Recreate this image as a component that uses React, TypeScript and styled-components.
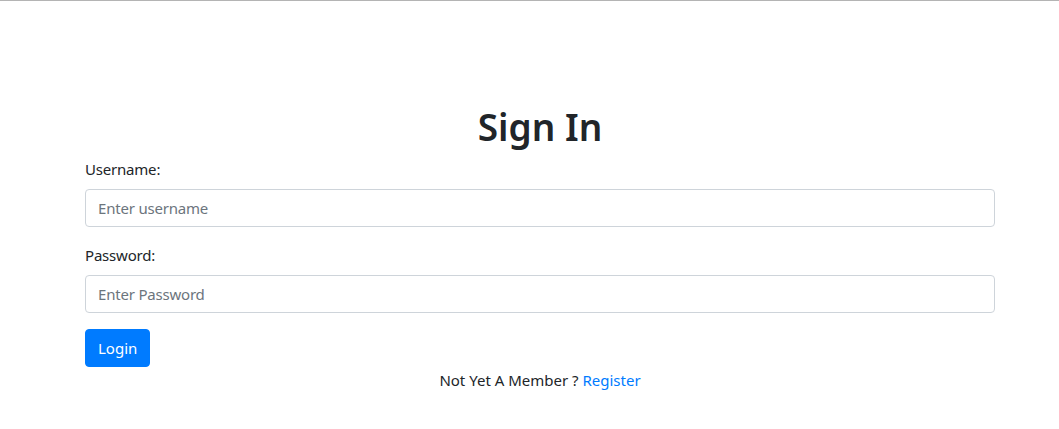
import React from "react";
import styled, { createGlobalStyle } from "styled-components";

const GlobalStyle = createGlobalStyle`
  html, body {
    margin: 0;
    padding: 0;
    background: #ffffff;
  }
  body {
    font-family: "Noto Sans", "Open Sans", sans-serif;
    font-size: 16px;
    line-height: 1.5;
    color: #212529;
  }
  * { box-sizing: border-box; }
`;

const TopRule = styled.div`
  height: 1px;
  background: #b4b4b4;
`;

const Page = styled.main`
  padding: 102px 64px 40px 85px;
`;

const Title = styled.h1`
  margin: 0 0 6px;
  font-size: 37px;
  line-height: 48px;
  font-weight: 600;
  text-align: center;
  color: #212529;
`;

const Form = styled.form`
  display: flex;
  flex-direction: column;
`;

const Group = styled.div<{ $gap: number }>`
  display: flex;
  flex-direction: column;
  margin-bottom: ${(p) => p.$gap}px;
`;

const Label = styled.label`
  display: block;
  font-size: 15px;
  line-height: 24px;
  margin-bottom: 8px;
  letter-spacing: -0.2px;
`;

const Input = styled.input`
  display: block;
  width: 100%;
  height: 38px;
  padding: 6px 12px;
  font-family: inherit;
  font-size: 15px;
  color: #495057;
  background: #fff;
  border: 1px solid #ced4da;
  border-radius: 4px;
  outline: none;
  letter-spacing: -0.2px;
  &::placeholder {
    color: #6c757d;
    opacity: 1;
  }
`;

const Button = styled.button`
  align-self: flex-start;
  height: 38px;
  padding: 0 12px;
  font-family: inherit;
  font-size: 15px;
  color: #fff;
  background: #007bff;
  border: 1px solid #007bff;
  border-radius: 4px;
  cursor: pointer;
`;

const Footer = styled.p`
  margin: 1px 0 0;
  text-align: center;
  font-size: 15px;
  line-height: 24px;
`;

const Link = styled.a`
  color: #007bff;
  text-decoration: none;
`;

export default function App() {
  return (
    <>
      <GlobalStyle />
      <TopRule />
      <Page>
        <Title>Sign In</Title>
        <Form onSubmit={(e) => e.preventDefault()}>
          <Group $gap={16}>
            <Label htmlFor="username">Username:</Label>
            <Input id="username" type="text" placeholder="Enter username" />
          </Group>
          <Group $gap={16}>
            <Label htmlFor="password">Password:</Label>
            <Input id="password" type="password" placeholder="Enter Password" />
          </Group>
          <Button type="submit">Login</Button>
        </Form>
        <Footer>
          Not Yet A Member ? <Link href="#">Register</Link>
        </Footer>
      </Page>
    </>
  );
}
